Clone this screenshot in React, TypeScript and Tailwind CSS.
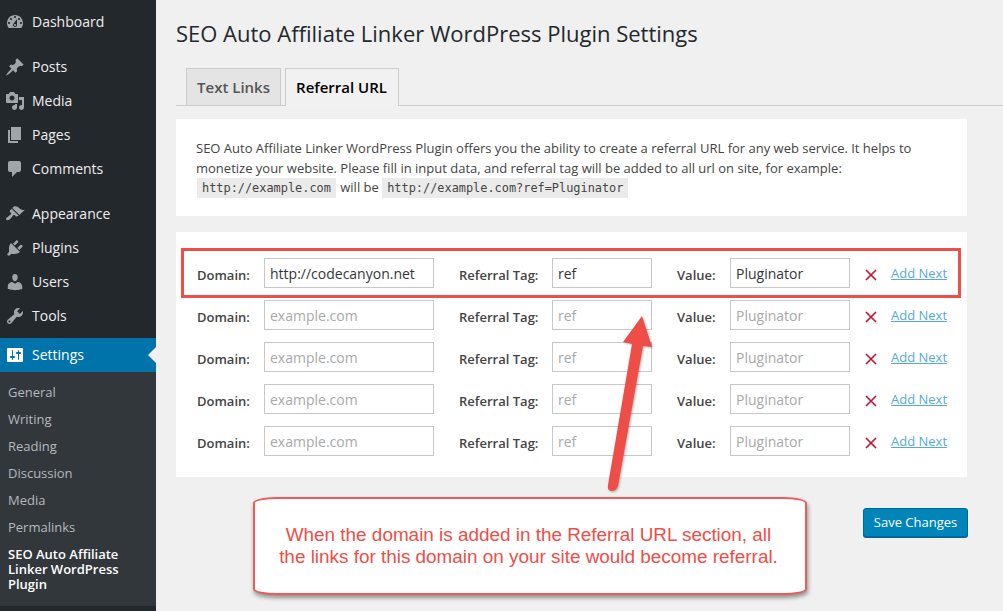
const sans = "font-['Open_Sans',sans-serif]"

const icons: Record<string, string> = {
  dashboard: 'M3.76 16h12.48c1.1-1.37 1.76-3.11 1.76-5 0-4.42-3.58-8-8-8s-8 3.58-8 8c0 1.89.66 3.63 1.76 5zM10 4c.55 0 1 .45 1 1s-.45 1-1 1-1-.45-1-1 .45-1 1-1zM6 6c.55 0 1 .45 1 1s-.45 1-1 1-1-.45-1-1 .45-1 1-1zm8 0c.55 0 1 .45 1 1s-.45 1-1 1-1-.45-1-1 .45-1 1-1zm-5.37 5.55L12 7v6c0 1.1-.9 2-2 2s-2-.9-2-2c0-.57.24-1.08.63-1.45zM4 10c.55 0 1 .45 1 1s-.45 1-1 1-1-.45-1-1 .45-1 1-1zm12 0c.55 0 1 .45 1 1s-.45 1-1 1-1-.45-1-1 .45-1 1-1zm-5 3c0-.55-.45-1-1-1s-1 .45-1 1 .45 1 1 1 1-.45 1-1z',
  posts: 'M10.44 3.02l1.82-1.82 6.36 6.35-1.83 1.82c-1.05-.68-2.48-.57-3.41.36l-.75.75c-.92.93-1.04 2.35-.35 3.41l-1.83 1.82-2.41-2.41-2.8 2.79c-.42.42-3.38 2.71-3.8 2.29s1.86-3.39 2.28-3.81l2.79-2.79L4.1 9.36l1.83-1.82c1.05.69 2.48.57 3.4-.36l.75-.75c.93-.92 1.05-2.35.36-3.41z',
  media: 'M13 11V4c0-.55-.45-1-1-1h-1.67L9 1H5L3.67 3H2c-.55 0-1 .45-1 1v7c0 .55.45 1 1 1h10c.55 0 1-.45 1-1zM7 4.5c1.38 0 2.5 1.12 2.5 2.5S8.38 9.5 7 9.5 4.5 8.38 4.5 7 5.62 4.5 7 4.5zM14 6h5v10.5c0 1.38-1.12 2.5-2.5 2.5S14 17.88 14 16.5s1.12-2.5 2.5-2.5c.17 0 .34.02.5.05V9h-3V6zm-4 8.05V13h2v3.5c0 1.38-1.12 2.5-2.5 2.5S7 17.88 7 16.5 8.12 14 9.5 14c.17 0 .34.02.5.05z',
  pages: 'M6 15V2h10v13H6zm-1 1h8v2H3V5h2v11z',
  comments: 'M5 2h9c1.1 0 2 .9 2 2v7c0 1.1-.9 2-2 2h-2l-5 5v-5H5c-1.1 0-2-.9-2-2V4c0-1.1.9-2 2-2z',
  appearance: 'M14.48 11.06L7.41 3.99l1.5-1.5c.5-.56 2.3-.47 3.51.32 1.21.8 1.43 1.28 2.91 2.1 1.18.64 2.45 1.26 4.45.85zm-.71.71L6.7 4.7 4.93 6.47c-.39.39-.39 1.02 0 1.41l1.06 1.06c.39.39.39 1.03 0 1.42-.6.6-1.43 1.11-2.21 1.69-.35.26-.7.53-1.01.84C1.43 13.23.4 14.75 1.4 15.74c.99 1 3.01.03 4.36-1.32.3-.3.57-.65.84-1 .58-.78 1.08-1.61 1.69-2.21.39-.39 1.02-.39 1.41 0l1.06 1.06c.39.39 1.02.39 1.41 0z',
  plugins: 'M13.11 4.36L9.87 7.6 8 5.73l3.24-3.24c.35-.34 1.05-.2 1.56.32.52.51.66 1.21.31 1.55zm-8 1.77l.91-1.12 9.01 9.01-1.19.84c-.71.71-2.63 1.16-3.82 1.16H6.14L4.9 17.26c-.59.59-1.54.59-2.12 0-.59-.58-.59-1.53 0-2.12l1.24-1.24v-3.88c0-1.13.4-3.19 1.09-3.89zm7.26 3.97l3.24-3.24c.34-.35 1.04-.21 1.55.31.52.51.66 1.21.31 1.55l-3.24 3.25z',
  users: 'M10 9.25c-2.27 0-2.73-3.44-2.73-3.44C7 4.02 7.82 2 9.97 2c2.16 0 2.98 2.02 2.71 3.81 0 0-.41 3.44-2.68 3.44zm0 2.57L12.72 10c2.39 0 4.52 2.33 4.52 4.53v2.49s-3.65 1.13-7.24 1.13c-3.65 0-7.24-1.13-7.24-1.13v-2.49c0-2.25 1.94-4.48 4.47-4.48z',
  tools: 'M16.68 9.77c-1.34 1.34-3.3 1.67-4.95.99l-5.41 6.52c-.99.99-2.59.99-3.58 0s-.99-2.59 0-3.57l6.52-5.42c-.68-1.65-.35-3.61.99-4.95 1.28-1.28 3.12-1.62 4.72-1.06l-2.89 2.89 2.82 2.82 2.86-2.87c.53 1.58.18 3.39-1.08 4.65zM3.81 16.21c.4.39 1.04.39 1.43 0 .4-.4.4-1.04 0-1.43-.39-.4-1.03-.4-1.43 0-.39.39-.39 1.03 0 1.43z',
  settings: 'M18 16V4c0-.55-.45-1-1-1H3c-.55 0-1 .45-1 1v12c0 .55.45 1 1 1h14c.55 0 1-.45 1-1zM8 11h1c.55 0 1 .45 1 1s-.45 1-1 1H8v1.5c0 .28-.22.5-.5.5s-.5-.22-.5-.5V13H6c-.55 0-1-.45-1-1s.45-1 1-1h1V5.5c0-.28.22-.5.5-.5s.5.22.5.5V11zm5-2h-1c-.55 0-1-.45-1-1s.45-1 1-1h1V5.5c0-.28.22-.5.5-.5s.5.22.5.5V7h1c.55 0 1 .45 1 1s-.45 1-1 1h-1v5.5c0 .28-.22.5-.5.5s-.5-.22-.5-.5V9z',
}

function MenuItem({ icon, label }: { icon: string; label: string }) {
  return (
    <div className="flex h-[34px] items-center pl-[5px] text-[14px] text-[#eee]">
      <svg viewBox="0 0 20 20" className="h-5 w-5 fill-[#a0a5aa]">
        <path d={icons[icon]} />
      </svg>
      <span className="ml-[7px] pb-[2px]">{label}</span>
    </div>
  )
}

const rows = [0, 1, 2, 3, 4]

function Row({ filled }: { filled: boolean }) {
  const input =
    "h-[30px] border border-[#c8c8c8] bg-white px-[5px] text-[14px] text-[#32373c] outline-none placeholder:text-[#a9a9a9]"
  const label = 'text-[13px] font-semibold text-[#444] mt-[6px]'
  return (
    <div className="flex h-[30px] items-center">
      <span className={`${label} w-[67px]`}>Domain:</span>
      <input className={`${input} w-[170px]`} placeholder="example.com" defaultValue={filled ? 'http://codecanyon.net' : ''} />
      <span className={`${label} ml-[25px] w-[93px]`}>Referral Tag:</span>
      <input className={`${input} w-[100px]`} placeholder="ref" defaultValue={filled ? 'ref' : ''} />
      <span className={`${label} ml-[25px] w-[53px]`}>Value:</span>
      <input className={`${input} w-[120px]`} placeholder="Pluginator" defaultValue={filled ? 'Pluginator' : ''} />
      <svg viewBox="0 0 12 12" className="ml-[15px] mt-[3px] h-3 w-3 stroke-[#c4122f]" strokeWidth="1.6">
        <path d="M1 1l10 10M11 1L1 11" />
      </svg>
      <a className="ml-[14px] mt-[1px] text-[13px] text-[#55a9d9] underline">Add Next</a>
    </div>
  )
}

export default function App() {
  return (
    <div className={`relative flex h-[611px] w-[1003px] overflow-hidden bg-[#f0f0f0] ${sans}`}>
      <aside className="flex w-[156px] shrink-0 flex-col bg-[#23282d] pt-[5px]">
        <MenuItem icon="dashboard" label="Dashboard" />
        <div className="mt-[11px]">
          <MenuItem icon="posts" label="Posts" />
          <MenuItem icon="media" label="Media" />
          <MenuItem icon="pages" label="Pages" />
          <MenuItem icon="comments" label="Comments" />
        </div>
        <div className="mt-[11px]">
          <MenuItem icon="appearance" label="Appearance" />
          <MenuItem icon="plugins" label="Plugins" />
          <MenuItem icon="users" label="Users" />
          <MenuItem icon="tools" label="Tools" />
        </div>
        <div className="relative mt-[5px] flex h-[34px] items-center bg-[#0073aa] pl-[5px] text-[14px] text-white">
          <svg viewBox="0 0 20 20" className="h-5 w-5 fill-white">
            <path d={icons.settings} />
          </svg>
          <span className="ml-[7px] pb-[2px]">Settings</span>
          <div className="absolute right-0 top-[9px] h-0 w-0 border-y-[8px] border-r-[8px] border-y-transparent border-r-[#f1f1f1]" />
        </div>
        <div className="flex h-[234px] flex-col bg-[#32373c] pl-2 pt-[7px] text-[13px] text-[#b4b9be]">
          {['General', 'Writing', 'Reading', 'Discussion', 'Media', 'Permalinks'].map((s) => (
            <div key={s} className="flex h-[27px] items-center">{s}</div>
          ))}
          <div className="mt-[6px] text-[13px] font-semibold leading-[15px] text-white">
            SEO Auto Affiliate<br />Linker WordPress<br />Plugin
          </div>
        </div>
      </aside>

      <main className="ml-5 w-[791px] shrink-0">
        <h1 className="mt-[17px] text-[22px] leading-[32px] text-[#23282d]">SEO Auto Affiliate Linker WordPress Plugin Settings</h1>
        <nav className="mt-[19px] flex h-[38px] w-[827px] border-b border-[#ccc] pl-[10px]">
          <div className="flex h-[38px] w-[95px] items-center justify-center border border-[#ccc] bg-[#e4e4e4] text-[15px] font-semibold text-[#555]">Text Links</div>
          <div className="ml-1 flex h-[38px] w-[114px] items-center justify-center border border-b-0 border-[#ccc] bg-[#f1f1f1] pr-[1px] text-[15px] font-semibold text-black">Referral URL</div>
        </nav>
        <section className="mt-[13px] h-[97px] bg-white px-5 pt-[20px] text-[13px] leading-[19.5px] text-[#444]">
          SEO Auto Affiliate Linker WordPress Plugin offers you the ability to create a referral URL for any web service. It helps to<br />
          monetize your website. Please fill in input data, and referral tag will be added to all url on site, for example:<br />
          <code className="mx-px bg-[#ebebeb] px-[5px] py-[3px] font-['DejaVu_Sans_Mono',monospace] text-[11.9px]">http://example.com</code>{' '}
          will be{' '}
          <code className="bg-[#ebebeb] px-[5px] py-[3px] font-['DejaVu_Sans_Mono',monospace] text-[11.9px]">http://example.com?ref=Pluginator</code>
        </section>
        <section className="mt-4 flex h-[245px] flex-col gap-3 bg-white pl-[21px] pt-[26px]">
          {rows.map((i) => (
            <Row key={i} filled={i === 0} />
          ))}
        </section>
        <div className="mt-[31px] flex justify-end">
          <button className="-mr-px h-[29px] w-[105px] rounded-[3px] border border-[#006799] bg-[#0085ba] text-[13px] text-white shadow-[0_1px_0_#006799]">
            Save Changes
          </button>
        </div>
      </main>

      {/* annotations on top of the screenshot */}
      <div className="absolute left-[181px] top-[248px] h-[50px] w-[780px] border-[3px] border-[#ef4d48]" />
      <svg className="absolute left-0 top-0 drop-shadow-[1px_1px_1px_rgba(0,0,0,0.3)]" width="1003" height="611">
        <path d="M642 316L652 347L643 346L618 486Q616 491 612 491Q607 491 608 485L632 344L623 342Z" className="fill-[#ef4d48]" />
      </svg>
      <div className="absolute left-[253px] top-[497px] flex h-[98px] w-[554px] items-center justify-center rounded-[24px/6px] border-2 border-[#ee5a55] bg-white pr-[3px] text-center font-['Liberation_Sans',sans-serif] text-[18.9px] leading-[22px] text-[#ef4d48] shadow-[1px_3px_4px_rgba(0,0,0,0.4)]">
        <p>
          When the domain is added in the Referral URL section, all<br />
          the links for this domain on your site would become referral.
        </p>
      </div>
    </div>
  )
}
